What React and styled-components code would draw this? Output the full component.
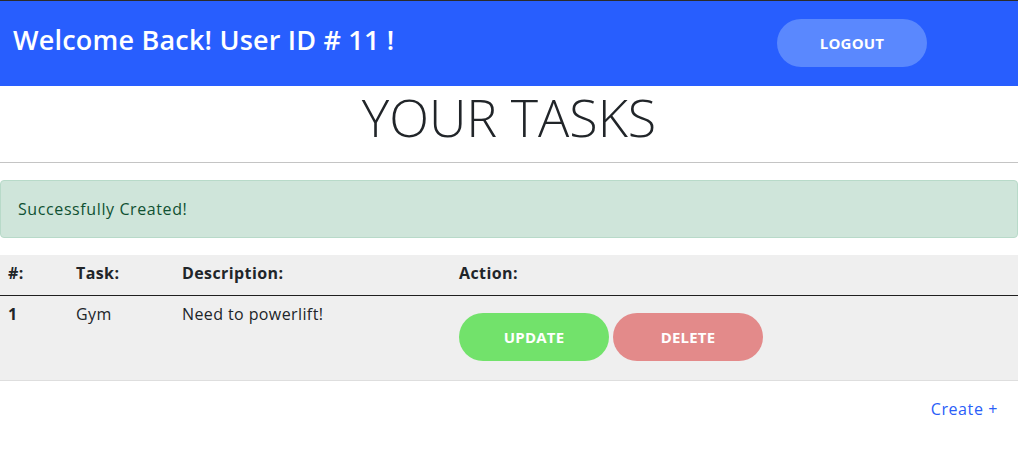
import React from "react";
import styled, { createGlobalStyle } from "styled-components";

const Global = createGlobalStyle`
  html, body { margin: 0; padding: 0; background: #fff; }
  body { font-family: "Open Sans", "Noto Sans", sans-serif; color: #212529; }
  * { box-sizing: border-box; }
`;

const Header = styled.header`
  height: 86px;
  background: #285efe;
  border-top: 1px solid #2b2b2b;
  display: flex;
  align-items: flex-start;
  justify-content: space-between;
  padding: 18px 91px 0 13px;
`;

const Welcome = styled.h1`
  margin: 3px 0 0;
  color: #fff;
  font-size: 27px;
  font-weight: 600;
  line-height: 36px;
  letter-spacing: 0.2px;
`;

const LogoutButton = styled.button`
  width: 150px;
  height: 48px;
  border: none;
  border-radius: 24px;
  background: #5a88fe;
  color: #fff;
  font-family: inherit;
  font-weight: 700;
  font-size: 15px;
  letter-spacing: 0.2px;
`;

const Title = styled.h2`
  margin: 0;
  padding: 0;
  height: 76px;
  text-align: center;
  font-weight: 300;
  font-size: 52px;
  line-height: 62px;
  color: #212529;
`;

const Rule = styled.hr`
  margin: 0 0 17px;
  border: none;
  border-top: 1px solid #c4c4c4;
`;

const Alert = styled.div`
  background: #cfe5da;
  border: 1px solid #b8dac9;
  border-radius: 4px;
  color: #0f5132;
  padding: 16px 17px;
  font-size: 16px;
  letter-spacing: 0.6px;
  line-height: 24px;
  margin-bottom: 17px;
`;

const Table = styled.table`
  width: 100%;
  border-collapse: collapse;
  background: #efefef;
  font-size: 16px;
  letter-spacing: 0.4px;
`;

const Th = styled.th`
  text-align: left;
  font-weight: 700;
  padding: 6px 8px 10px;
  line-height: 24px;
  border-bottom: 1px solid #1f1f1f;
  width: ${(p) => p.$w || "auto"};
`;

const Td = styled.td`
  vertical-align: top;
  padding: 6px 8px 10px;
  line-height: 24px;
  font-weight: ${(p) => (p.$bold ? 700 : 400)};
  border-bottom: 1px solid #dedede;
`;

const Actions = styled.div`
  display: flex;
  gap: 4px;
  margin: 11px 0 9px;
`;

const ActionButton = styled.button`
  width: 150px;
  height: 48px;
  border: none;
  border-radius: 24px;
  background: ${(p) => p.$bg};
  color: #fff;
  font-family: inherit;
  font-weight: 700;
  font-size: 15px;
  letter-spacing: 0.2px;
`;

const Footer = styled.div`
  display: flex;
  justify-content: flex-end;
  padding: 16px 20px 0 0;
`;

const CreateLink = styled.a`
  color: #2a5ef8;
  text-decoration: none;
  font-size: 16px;
  letter-spacing: 0.6px;
  line-height: 24px;
`;

export default function App() {
  return (
    <>
      <Global />
      <Header>
        <Welcome>Welcome Back! User ID # 11 !</Welcome>
        <LogoutButton>LOGOUT</LogoutButton>
      </Header>
      <Title>YOUR TASKS</Title>
      <Rule />
      <Alert>Successfully Created!</Alert>
      <Table>
        <thead>
          <tr>
            <Th $w="68px">#:</Th>
            <Th $w="106px">Task:</Th>
            <Th $w="277px">Description:</Th>
            <Th>Action:</Th>
          </tr>
        </thead>
        <tbody>
          <tr>
            <Td $bold>1</Td>
            <Td>Gym</Td>
            <Td>Need to powerlift!</Td>
            <Td>
              <Actions>
                <ActionButton $bg="#72e26b">UPDATE</ActionButton>
                <ActionButton $bg="#e38a8a">DELETE</ActionButton>
              </Actions>
            </Td>
          </tr>
        </tbody>
      </Table>
      <Footer>
        <CreateLink href="#">Create +</CreateLink>
      </Footer>
    </>
  );
}
